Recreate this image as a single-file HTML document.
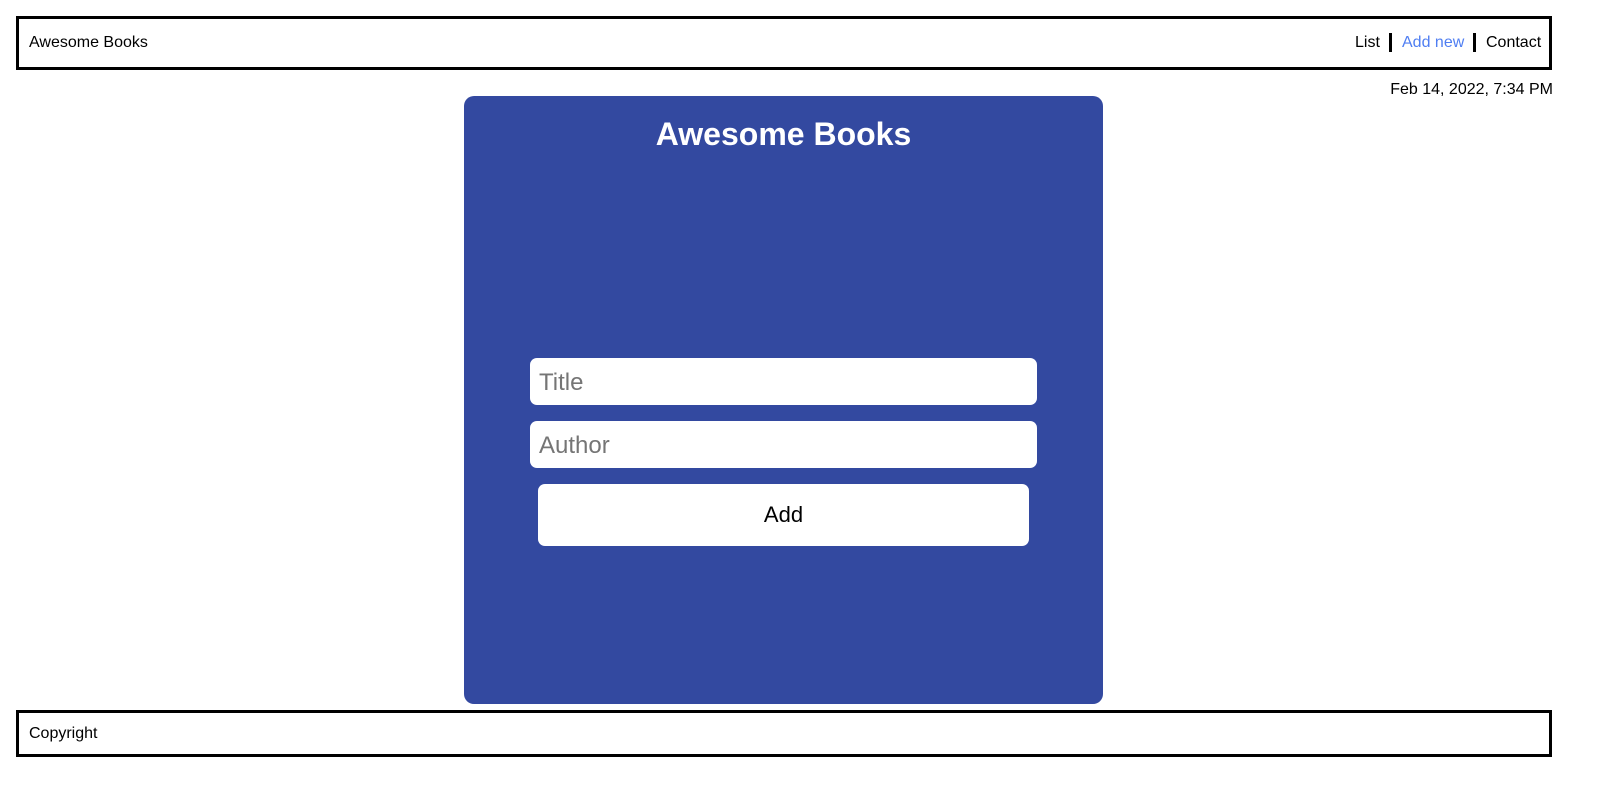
<!DOCTYPE html>
<html><head><style>
body{margin:0;width:1600px;height:789px;background:#fff;font-family:"Liberation Sans",Arial,sans-serif;position:relative;overflow:hidden}
.box{position:absolute;left:16px;width:1530px;border:3px solid #000;}
#hdr{top:16px;height:48px}
#ftr{top:710px;height:41px}
.t{position:absolute;font-size:16px;color:#000;white-space:nowrap}
.sep{position:absolute;width:3px;height:19px;background:#000;top:33px}
#panel{position:absolute;left:464px;top:96px;width:639px;height:608px;background:#3349a0;border-radius:10px}
h1{position:absolute;top:116px;left:464px;width:639px;text-align:center;margin:0;color:#fff;font-size:32px;font-weight:bold}
.in{position:absolute;left:530px;width:507px;height:47px;background:#fff;border-radius:7px}
.in span{position:absolute;left:9px;top:11px;font-size:24px;color:#757575}
#btn{position:absolute;left:538px;top:484px;width:491px;height:62px;background:#fff;border-radius:7px;text-align:center;line-height:62px;font-size:22px}
</style></head><body>
<div class="box" id="hdr"></div>
<div class="t" style="left:29px;top:34px">Awesome Books</div>
<div class="t" style="left:1355px;top:34px">List</div>
<div class="sep" style="left:1389px"></div>
<div class="t" style="left:1402px;top:34px;color:#4f7ef2">Add new</div>
<div class="sep" style="left:1473px"></div>
<div class="t" style="left:1486px;top:34px">Contact</div>
<div class="t" style="right:47px;top:81px">Feb 14, 2022, 7:34 PM</div>
<div id="panel"></div>
<h1>Awesome Books</h1>
<div class="in" style="top:358px"><span>Title</span></div>
<div class="in" style="top:421px"><span>Author</span></div>
<div id="btn">Add</div>
<div class="box" id="ftr"></div>
<div class="t" style="left:29px;top:725px">Copyright</div>
</body></html>
